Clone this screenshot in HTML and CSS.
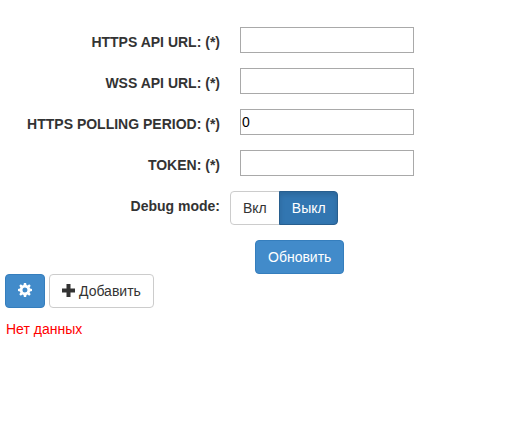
FILE: index.html
```html
<!DOCTYPE html>
<html lang="ru">
<head>
    <meta charset="UTF-8">
    <meta name="viewport" content="width=device-width, initial-scale=1.0">
    <title>Настройки API</title>
    <link rel="stylesheet" href="styles.css">
</head>
<body>
    <form class="form-horizontal">
        <div class="form-group">
            <label class="control-label" for="httpsUrl">HTTPS API URL: (*)</label>
            <input type="text" id="httpsUrl" class="field">
        </div>
        <div class="form-group">
            <label class="control-label" for="wssUrl">WSS API URL: (*)</label>
            <input type="text" id="wssUrl" class="field">
        </div>
        <div class="form-group">
            <label class="control-label" for="period">HTTPS POLLING PERIOD: (*)</label>
            <input type="text" id="period" class="field" value="0">
        </div>
        <div class="form-group">
            <label class="control-label" for="token">TOKEN: (*)</label>
            <input type="text" id="token" class="field">
        </div>
        <div class="form-group">
            <label class="control-label">Debug mode:</label>
            <div class="btn-group">
                <button type="button" class="btn btn-default">Вкл</button>
                <button type="button" class="btn btn-primary active">Выкл</button>
            </div>
        </div>
        <div class="form-actions">
            <button type="button" class="btn btn-primary">Обновить</button>
        </div>
    </form>

    <div class="toolbar">
        <button type="button" class="btn btn-primary">
            <svg class="icon" viewBox="0 0 14 14" width="14" height="14">
                <path fill="currentColor" fill-rule="evenodd" d="M5.900 0h2.200l.4 1.900 1.100.5L11.200 1.300l1.500 1.500-1.100 1.600.5 1.100 1.900.4v2.200l-1.900.4-.5 1.100 1.100 1.600-1.500 1.500-1.600-1.100-1.100.5L8.100 14H5.900l-.4-1.900-1.100-.5-1.600 1.100-1.500-1.500 1.100-1.600-.5-1.100L0 8.100V5.900l1.900-.4.5-1.100L1.300 2.800l1.500-1.500 1.600 1.100 1.100-.5zM7 4.500a2.500 2.500 0 1 0 0 5 2.500 2.500 0 0 0 0-5z"/>
            </svg>
        </button>
        <button type="button" class="btn btn-default">
            <svg class="icon" viewBox="0 0 14 14" width="14" height="14">
                <path fill="currentColor" d="M4.500 1h4v4.500H13v4H8.500V14h-4V9.500H0v-4h4.500z"/>
            </svg>
            Добавить
        </button>
    </div>

    <div class="empty">Нет данных</div>
</body>
</html>
```

FILE: styles.css
```css
* {
    box-sizing: border-box;
}

body {
    margin: 0;
    padding: 27px 5px 0;
    font-family: "Liberation Sans", Arial, sans-serif;
    font-size: 14px;
    line-height: 20px;
    color: #333;
    background-color: #fff;
}

.form-group {
    display: flex;
    align-items: flex-start;
    margin-bottom: 15px;
}

.control-label {
    width: 215px;
    padding-top: 5px;
    font-weight: bold;
    text-align: right;
}

.field {
    width: 174px;
    height: 26px;
    margin: 0 0 0 20px;
    padding: 1px;
    border: 1px solid #a9a9a9;
    font-family: inherit;
    font-size: 14px;
    color: #000;
}

.btn {
    display: inline-flex;
    align-items: center;
    height: 34px;
    margin: 0;
    padding: 6px 12px;
    border: 1px solid transparent;
    border-radius: 4px;
    font-family: inherit;
    font-size: 14px;
    line-height: 20px;
    cursor: pointer;
}

.btn-default {
    color: #333;
    background-color: #fff;
    border-color: #ccc;
}

.btn-primary {
    color: #fff;
    background-color: #428bca;
    border-color: #357ebd;
}

.btn-primary.active {
    background-color: #3276b1;
    border-color: #285e8e;
    box-shadow: inset 0 3px 5px rgba(0, 0, 0, 0.125);
}

.btn-group {
    display: flex;
    margin-left: 10px;
}

.btn-group .btn:first-child {
    border-top-right-radius: 0;
    border-bottom-right-radius: 0;
}

.btn-group .btn:last-child {
    margin-left: -1px;
    padding-right: 11px;
    border-top-left-radius: 0;
    border-bottom-left-radius: 0;
}

.form-actions {
    display: flex;
    padding-left: 250px;
}

.toolbar {
    display: flex;
    gap: 4px;
}

.toolbar .btn-default {
    gap: 3px;
}

.icon {
    display: block;
    margin-bottom: 2px;
}

.empty {
    padding: 11px 1px 0;
    color: #f00;
}
```
